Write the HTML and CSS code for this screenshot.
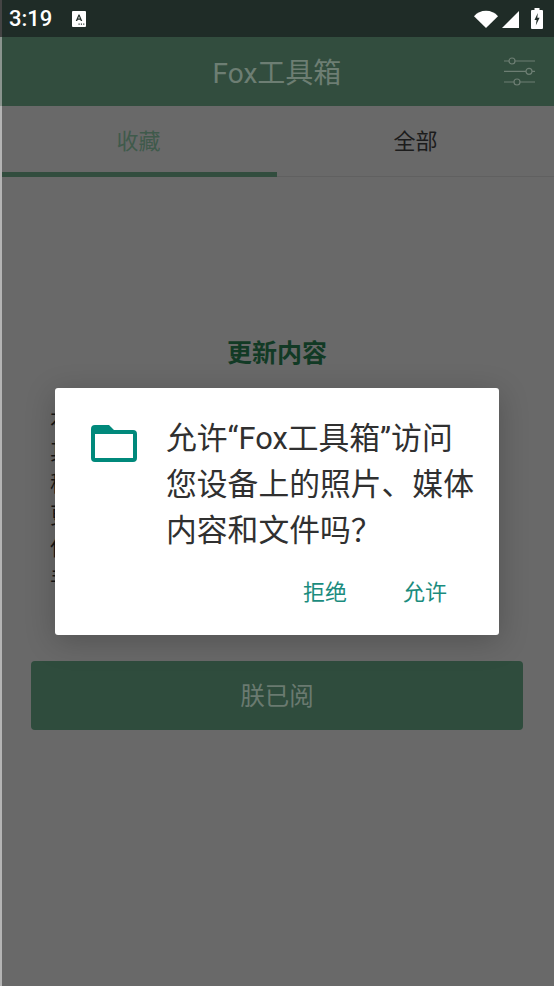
FILE: index.html
```html
<!DOCTYPE html>
<html>
<head>
    <title>Fox工具箱</title>
    <meta charset="utf-8">
    <link rel="stylesheet" href="styles.css">
</head>
<body>
    <div class="screen">
        <div class="status-bar">
            <span class="clock">3:19</span>
            <svg class="notice-icon" width="14" height="16" viewBox="0 0 15 16" preserveAspectRatio="none">
                <rect x="0" y="0" width="15" height="16" rx="1" fill="#fff"/>
                <path d="M4 10 L7 3.5 H8 L11 10 H9.4 L8.9 8.7 H6.1 L5.6 10 Z M6.6 7.4 H8.4 L7.5 5.2 Z" fill="#1f2c27"/>
                <path d="M7 12.5 h1.2 v1.2 h-1.2 z M9.5 12.5 h1.2 v1.2 h-1.2 z M12 12.5 h1.2 v1.2 h-1.2 z" fill="#1f2c27"/>
            </svg>
            <div class="status-icons">
                <svg width="24" height="18" viewBox="0 0 24 18">
                    <path d="M0 6.2 C3 2.8 7.2 0.8 12 0.8 C16.8 0.8 21 2.8 24 6.2 L12 18 Z" fill="#fff"/>
                </svg>
                <svg class="signal" width="17" height="17" viewBox="0 0 17 17">
                    <path d="M17 0 V17 H0 Z" fill="#fff"/>
                </svg>
                <svg class="battery" width="12" height="21" viewBox="0 0 12 21">
                    <path d="M3.5 0 H8.5 V2 H11 A1 1 0 0 1 12 3 V20 A1 1 0 0 1 11 21 H1 A1 1 0 0 1 0 20 V3 A1 1 0 0 1 1 2 H3.5 Z" fill="#fff"/>
                    <path d="M6.8 5 L3.5 12 H5.6 L4.8 17.5 L8.6 9.8 H6.3 Z" fill="#1f2c27"/>
                </svg>
            </div>
        </div>

        <div class="toolbar">
            <h1 class="toolbar-title">Fox工具箱</h1>
            <svg class="filter-icon" width="32" height="32" viewBox="0 0 32 32">
                <g fill="none" stroke="#6d7e73" stroke-width="1.2">
                    <path d="M0 5 H5 M11 5 H31"/>
                    <circle cx="8" cy="5" r="3"/>
                    <path d="M0 15.3 H22 M28 15.3 H31"/>
                    <circle cx="25" cy="15.3" r="3"/>
                    <path d="M0 26 H10 M16 26 H31"/>
                    <circle cx="13" cy="26" r="3"/>
                </g>
            </svg>
        </div>

        <div class="tabs">
            <div class="tab tab-active">收藏</div>
            <div class="tab">全部</div>
        </div>

        <div class="content">
            <h2 class="update-title">更新内容</h2>
            <div class="update-text">
                <p>本次更新修复了部分工具无法打开的问题，优</p>
                <p>其他工具的运行速度</p>
                <p>称号系统现已上线</p>
                <p>更多功能敬请期待</p>
                <p>任何问题都可以反馈</p>
                <p>手机版本同步更新</p>
            </div>
            <button class="confirm-button" type="button">朕已阅</button>
        </div>
    </div>

    <div class="edge-strip"></div>

    <div class="dialog">
        <div class="dialog-body">
            <svg class="folder-icon" width="46" height="37" viewBox="0 0 46 37">
                <path fill-rule="evenodd" fill="#00897b" d="M4 0 H18 L23 5 H42 A4 4 0 0 1 46 9 V33 A4 4 0 0 1 42 37 H4 A4 4 0 0 1 0 33 V4 A4 4 0 0 1 4 0 Z M4 9 V33 H42 V9 Z"/>
            </svg>
            <p class="dialog-text">允许“Fox工具箱”访问您设备上的照片、媒体内容和文件吗？</p>
        </div>
        <div class="dialog-actions">
            <span class="dialog-button">拒绝</span>
            <span class="dialog-button">允许</span>
        </div>
    </div>
</body>
</html>
```

FILE: styles.css
```css
body {
    font-family: Roboto, "Noto Sans CJK SC", sans-serif;
    margin: 0;
    padding: 0;
    background-color: #696969;
}
.screen {
    width: 554px;
    height: 986px;
    overflow: hidden;
    background-color: #696969;
}
.status-bar {
    display: flex;
    align-items: center;
    height: 37px;
    padding: 0 11px 0 9px;
    box-sizing: border-box;
    background-color: #1f2c27;
}
.clock {
    width: 63px;
    font-size: 22px;
    font-weight: 500;
    color: #fff;
}
.status-icons {
    display: flex;
    align-items: center;
    margin-left: auto;
}
.signal {
    margin: 1px 0 0 4px;
}
.battery {
    margin: 0 0 0 12px;
}
.toolbar {
    display: flex;
    align-items: center;
    justify-content: center;
    position: relative;
    height: 69px;
    padding-bottom: 2px;
    box-sizing: border-box;
    background-color: #324d3e;
}
.toolbar-title {
    margin: 0;
    font-size: 28px;
    font-weight: 400;
    color: #6d7e73;
}
.filter-icon {
    position: absolute;
    top: 19px;
    right: 18px;
}
.tabs {
    display: flex;
    height: 71px;
    box-sizing: border-box;
    border-bottom: 1px solid #606060;
}
.tab {
    flex: 1;
    display: flex;
    align-items: center;
    justify-content: center;
    padding-bottom: 1px;
    margin-bottom: -1px;
    border-bottom: 5px solid transparent;
    font-size: 22px;
    color: #1c1c1c;
}
.tab-active {
    border-bottom-color: #324d3e;
    color: #3f5a4b;
}
.content {
    display: flex;
    flex-direction: column;
    padding: 0 31px;
}
.update-title {
    margin: 158px 0 0;
    line-height: 38px;
    font-size: 25px;
    font-weight: 700;
    text-align: center;
    color: #123a25;
}
.update-text {
    margin: 31px 0 0 19px;
    height: 257px;
    overflow: hidden;
}
.update-text p {
    margin: 0;
    line-height: 32px;
    font-size: 21.5px;
    white-space: nowrap;
    color: #161616;
}
.confirm-button {
    height: 69px;
    padding: 0 0 2px;
    font-family: inherit;
    font-size: 24.5px;
    color: #6a7a70;
    background-color: #2f4c3d;
    border: none;
    border-radius: 4px;
}
.edge-strip {
    position: absolute;
    top: 0;
    left: 0;
    width: 2px;
    height: 986px;
    background: linear-gradient(#444 37px, #8a948e 37px, #8a948e 106px, #b4b4b4 106px);
}
.dialog {
    position: absolute;
    top: 388px;
    left: 55px;
    width: 444px;
    height: 247px;
    background-color: #fff;
    border-radius: 3px;
    box-shadow: 0 6px 30px rgba(0, 0, 0, 0.22);
}
.dialog-body {
    display: flex;
    padding: 28px 18px 0 36px;
}
.folder-icon {
    flex: none;
    margin: 9px 30px 0 0;
}
.dialog-text {
    margin: 0 0 0 -1px;
    line-height: 46px;
    font-size: 30.8px;
    color: #303030;
}
.dialog-actions {
    display: flex;
    justify-content: flex-end;
    gap: 56px;
    margin-top: 20px;
    padding-right: 52px;
}
.dialog-button {
    font-size: 22px;
    color: #1b8c7e;
}
```
